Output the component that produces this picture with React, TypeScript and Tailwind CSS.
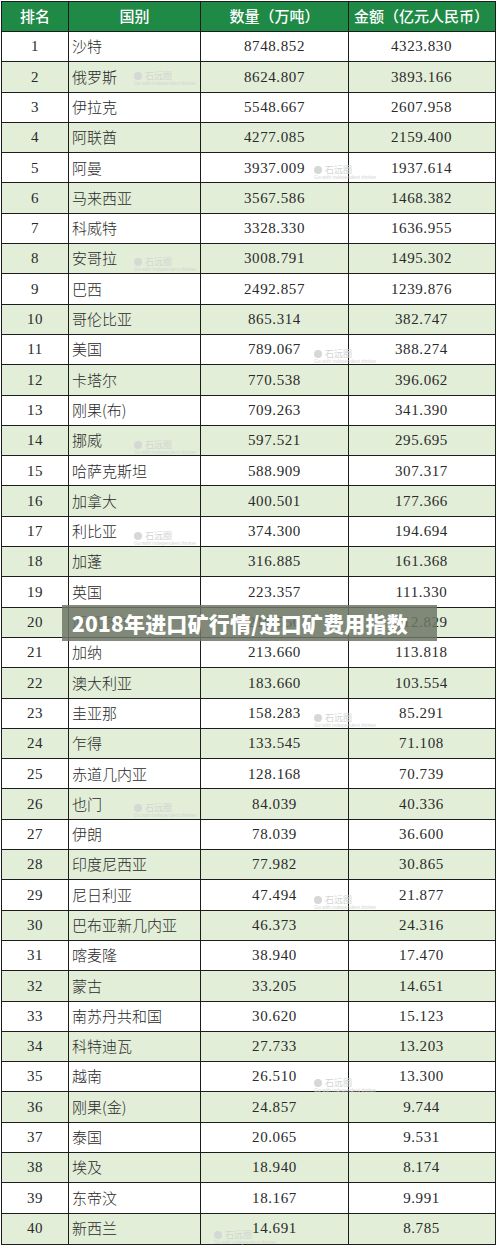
import React from "react";

type Row = [string, string, string];

const rows: Row[] = [
  ["沙特", "8748.852", "4323.830"],
  ["俄罗斯", "8624.807", "3893.166"],
  ["伊拉克", "5548.667", "2607.958"],
  ["阿联酋", "4277.085", "2159.400"],
  ["阿曼", "3937.009", "1937.614"],
  ["马来西亚", "3567.586", "1468.382"],
  ["科威特", "3328.330", "1636.955"],
  ["安哥拉", "3008.791", "1495.302"],
  ["巴西", "2492.857", "1239.876"],
  ["哥伦比亚", "865.314", "382.747"],
  ["美国", "789.067", "388.274"],
  ["卡塔尔", "770.538", "396.062"],
  ["刚果(布)", "709.263", "341.390"],
  ["挪威", "597.521", "295.695"],
  ["哈萨克斯坦", "588.909", "307.317"],
  ["加拿大", "400.501", "177.366"],
  ["利比亚", "374.300", "194.694"],
  ["加蓬", "316.885", "161.368"],
  ["英国", "223.357", "111.330"],
  ["厄瓜多尔", "219.556", "112.829"],
  ["加纳", "213.660", "113.818"],
  ["澳大利亚", "183.660", "103.554"],
  ["圭亚那", "158.283", "85.291"],
  ["乍得", "133.545", "71.108"],
  ["赤道几内亚", "128.168", "70.739"],
  ["也门", "84.039", "40.336"],
  ["伊朗", "78.039", "36.600"],
  ["印度尼西亚", "77.982", "30.865"],
  ["尼日利亚", "47.494", "21.877"],
  ["巴布亚新几内亚", "46.373", "24.316"],
  ["喀麦隆", "38.940", "17.470"],
  ["蒙古", "33.205", "14.651"],
  ["南苏丹共和国", "30.620", "15.123"],
  ["科特迪瓦", "27.733", "13.203"],
  ["越南", "26.510", "13.300"],
  ["刚果(金)", "24.857", "9.744"],
  ["泰国", "20.065", "9.531"],
  ["埃及", "18.940", "8.174"],
  ["东帝汶", "18.167", "9.991"],
  ["新西兰", "14.691", "8.785"],
];

// faint watermark stamps (left px, top px)
const marks: [number, number][] = [
  [134, 70],
  [314, 164],
  [134, 256],
  [314, 348],
  [134, 439],
  [134, 530],
  [314, 712],
  [134, 802],
  [314, 894],
  [314, 1077],
  [214, 1229],
];

function Watermark({ x, y }: { x: number; y: number }) {
  return (
    <div
      className="absolute pointer-events-none flex flex-col items-start leading-none text-[#d3d5d3]"
      style={{ left: x, top: y }}
    >
      <div className="flex items-center gap-[3px]">
        <span className="w-[8px] h-[8px] rounded-full bg-[#d6d8d6]" />
        <span className="text-[9px] [font-family:'Noto_Sans_CJK_SC',sans-serif]">石远圈</span>
      </div>
      <span className="text-[5px] mt-[1px] [font-family:'Liberation_Sans',sans-serif]">Go with independent thinker</span>
    </div>
  );
}

const num = "[font-family:'Liberation_Serif','Noto_Sans_CJK_SC',serif] text-[15px] tracking-[0.6px] text-[#2a2a2a]";
const cjk = "[font-family:'Noto_Sans_CJK_SC',sans-serif] text-[15px] font-light text-[#2a2a2a]";

export default function App() {
  return (
    <div className="relative w-[500px] h-[1246px] bg-white">
      <div className="ml-[1px] mt-[1px] w-[495px] border-[1.5px] border-[#1c1c1c]">
        {/* header */}
        <div className="grid grid-cols-[67px_132px_148px_145px] h-[30px] bg-[#1f8a46] text-white [font-family:'Noto_Sans_CJK_SC',sans-serif] text-[15px] font-medium border-b-[1.5px] border-[#1c1c1c]">
          <div className="flex items-center justify-center border-r-[1.5px] border-[#1c1c1c]">排名</div>
          <div className="flex items-center justify-center border-r-[1.5px] border-[#1c1c1c]">国别</div>
          <div className="flex items-center justify-center border-r-[1.5px] border-[#1c1c1c]">数量（万吨）</div>
          <div className="flex items-center justify-center">金额（亿元人民币）</div>
        </div>
        {rows.map((r, i) => (
          <div
            key={i}
            className={
              "grid grid-cols-[67px_132px_148px_145px] h-[30.3px] " +
              (i % 2 === 1 ? "bg-[#e2eed8] " : "bg-white ") +
              (i < rows.length - 1 ? "border-b-[1.5px] border-[#1c1c1c]" : "")
            }
          >
            <div className={"flex items-center justify-center border-r-[1.5px] border-[#1c1c1c] " + num}>{i + 1}</div>
            <div className={"flex items-center pl-[3px] border-r-[1.5px] border-[#1c1c1c] " + cjk}>{r[0]}</div>
            <div className={"flex items-center justify-center border-r-[1.5px] border-[#1c1c1c] " + num}>{r[1]}</div>
            <div className={"flex items-center justify-center " + num}>{r[2]}</div>
          </div>
        ))}
      </div>

      {marks.map(([x, y], i) => (
        <Watermark key={i} x={x} y={y} />
      ))}

      {/* title overlay */}
      <div className="absolute left-[62px] top-[604px] w-[375px] h-[36px] bg-[#6f7767]/85 flex items-center pl-[10px]">
        <span className="text-white font-black text-[21px] tracking-[0.2px] [font-family:'Noto_Sans_CJK_SC',sans-serif] leading-none">
          2018年进口矿行情/进口矿费用指数
        </span>
      </div>
    </div>
  );
}
